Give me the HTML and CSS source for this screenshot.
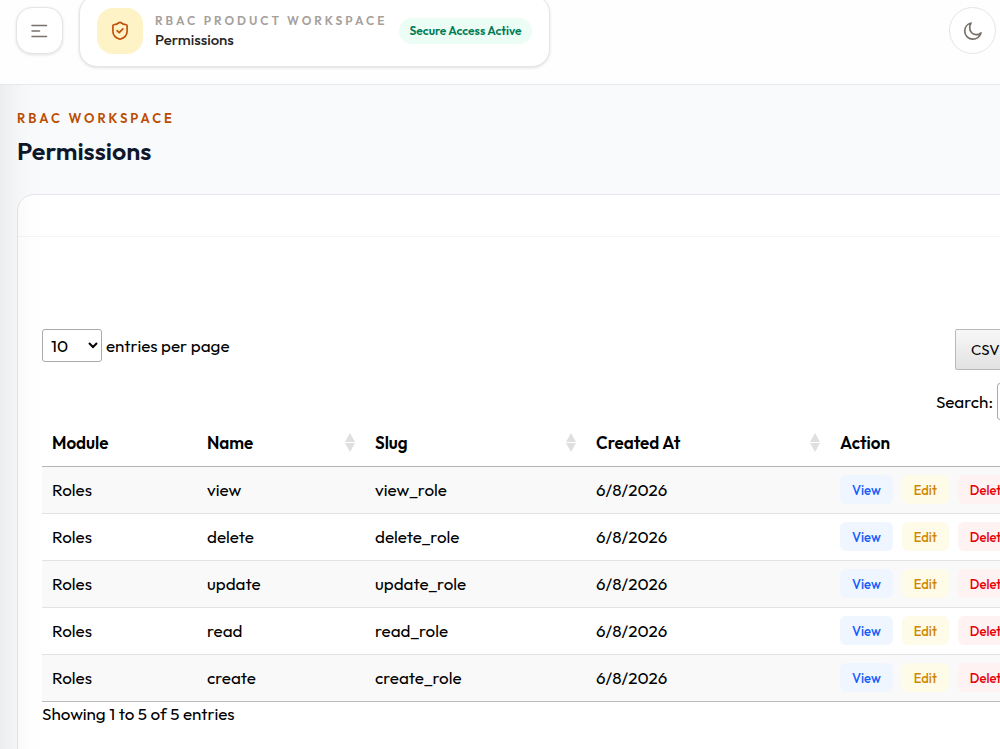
FILE: index.html
```html
<!DOCTYPE html>
<html lang="en">
<head>
  <meta charset="UTF-8">
  <meta name="viewport" content="width=device-width, initial-scale=1">
  <title>Permissions</title>
  <link rel="stylesheet" href="styles.css">
</head>
<body>
  <header class="topbar">
    <button type="button" class="icon-btn menu-btn" aria-label="Toggle sidebar">
      <svg width="18" height="14" viewBox="0 0 18 14" fill="none" stroke="#78716c" stroke-width="1.500" stroke-linecap="round">
        <path d="M1 1.500h14.500M1 7h7.500M1 12.500h14.500"/>
      </svg>
    </button>
    <div class="page-card">
      <span class="page-icon">
        <svg width="20" height="20" viewBox="0 0 24 24" fill="none" stroke="#c2500c" stroke-width="2" stroke-linecap="round" stroke-linejoin="round">
          <path d="M20.5 12.5c0 5-3.600 7.800-8.500 9.500-4.900-1.700-8.500-4.500-8.500-9.500V5.500a1 1 0 0 1 1-1c2.200 0 5-1.200 6.800-2.700a1.100 1.100 0 0 1 1.400 0C14.500 3.300 17.300 4.500 19.500 4.500a1 1 0 0 1 1 1z"/>
          <path d="M8.500 11.500l2.500 2.500 4.500-4.500"/>
        </svg>
      </span>
      <div class="page-text">
        <p class="page-label">RBAC Product Workspace</p>
        <p class="page-name">Permissions</p>
      </div>
      <span class="status">Secure Access Active</span>
    </div>
    <button type="button" class="icon-btn theme-btn" aria-label="Dark mode">
      <svg width="20" height="20" viewBox="0 0 20 20" fill="none" stroke="#78716c" stroke-width="1.700" stroke-linecap="round" stroke-linejoin="round">
        <path d="M8 2C4.300 2.900 1.700 6.200 1.700 10a8.200 8.200 0 0 0 8.200 8.200c3.900 0 7.200-2.700 8.100-6.400-1.200 1.200-2.900 1.900-4.600 1.900A6.700 6.700 0 0 1 6.700 7C6.700 5.100 7.200 3.300 8 2z"/>
      </svg>
    </button>
  </header>

  <main>
    <p class="eyebrow">RBAC Workspace</p>
    <h1>Permissions</h1>

    <div class="card">
      <div class="card-header"></div>
      <div class="card-body">
        <div class="controls">
          <div class="length">
            <select id="page-length">
              <option>10</option>
              <option>25</option>
              <option>50</option>
            </select>
            <label for="page-length">entries per page</label>
          </div>
          <div class="tools">
            <div class="export">
              <button type="button" class="export-btn">CSV</button>
            </div>
            <div class="search">
              <label for="search">Search:</label>
              <input type="search" id="search">
            </div>
          </div>
        </div>

        <table>
          <colgroup>
            <col class="col-module">
            <col class="col-name">
            <col class="col-slug">
            <col class="col-created">
            <col>
          </colgroup>
          <thead>
            <tr>
              <th>Module</th>
              <th><div class="sortable">Name <span class="sort"></span></div></th>
              <th><div class="sortable">Slug <span class="sort"></span></div></th>
              <th><div class="sortable">Created At <span class="sort"></span></div></th>
              <th>Action</th>
            </tr>
          </thead>
          <tbody>
            <tr>
              <td>Roles</td><td>view</td><td>view_role</td><td>6/8/2026</td>
              <td><div class="actions"><button type="button" class="view">View</button><button type="button" class="edit">Edit</button><button type="button" class="delete">Delete</button></div></td>
            </tr>
            <tr>
              <td>Roles</td><td>delete</td><td>delete_role</td><td>6/8/2026</td>
              <td><div class="actions"><button type="button" class="view">View</button><button type="button" class="edit">Edit</button><button type="button" class="delete">Delete</button></div></td>
            </tr>
            <tr>
              <td>Roles</td><td>update</td><td>update_role</td><td>6/8/2026</td>
              <td><div class="actions"><button type="button" class="view">View</button><button type="button" class="edit">Edit</button><button type="button" class="delete">Delete</button></div></td>
            </tr>
            <tr>
              <td>Roles</td><td>read</td><td>read_role</td><td>6/8/2026</td>
              <td><div class="actions"><button type="button" class="view">View</button><button type="button" class="edit">Edit</button><button type="button" class="delete">Delete</button></div></td>
            </tr>
            <tr>
              <td>Roles</td><td>create</td><td>create_role</td><td>6/8/2026</td>
              <td><div class="actions"><button type="button" class="view">View</button><button type="button" class="edit">Edit</button><button type="button" class="delete">Delete</button></div></td>
            </tr>
          </tbody>
        </table>
        <p class="info">Showing 1 to 5 of 5 entries</p>
      </div>
    </div>
  </main>
</body>
</html>
```
FILE: styles.css
```css
* {
  box-sizing: border-box;
  margin: 0;
  padding: 0;
}
body {
  font-family: Outfit, Lato, sans-serif;
  font-size: 17px;
  line-height: 24px;
  color: #000;
  background: #f9fafb;
  min-height: 100vh;
  overflow: hidden;
}
/* Soft shade cast by the closed sidebar */
body::after {
  content: "";
  position: fixed;
  inset: 0 auto 0 0;
  width: 44px;
  background: linear-gradient(to right, rgba(0, 0, 0, 0.05), rgba(0, 0, 0, 0.01) 50%, transparent);
  pointer-events: none;
}
button, select, input {
  font: inherit;
}
button {
  cursor: pointer;
}

/* Top bar */
.topbar {
  position: relative;
  z-index: 1;
  display: flex;
  align-items: center;
  gap: 16px;
  height: 85px;
  padding: 0 4px 23px 16px;
  background: #fefefe;
  border-bottom: 1px solid #e7e8ea;
}
.icon-btn {
  display: flex;
  align-items: center;
  justify-content: center;
  width: 47px;
  height: 47px;
  flex: none;
  background: #fff;
  border: 1px solid #e7e5e4;
}
.menu-btn {
  border-radius: 16px;
  box-shadow: 0 1px 3px rgba(0, 0, 0, 0.12);
}
.theme-btn {
  margin-left: auto;
  border-radius: 50%;
}
.page-card {
  display: flex;
  align-items: center;
  gap: 12px;
  flex: none;
  padding: 12px 17px;
  background: #fff;
  border: 1px solid #e7e5e4;
  border-radius: 18px;
  box-shadow: 0 1px 3px rgba(0, 0, 0, 0.12);
}
.page-icon {
  display: flex;
  align-items: center;
  justify-content: center;
  width: 46px;
  height: 46px;
  background: #fef3c6;
  border-radius: 16px;
}
.page-label {
  font-size: 12px;
  line-height: 18px;
  font-weight: 600;
  letter-spacing: 3px;
  text-transform: uppercase;
  color: #a6a09b;
}
.page-name {
  font-size: 15px;
  line-height: 20px;
  font-weight: 500;
  color: #292524;
}
.status {
  padding: 4px 10px;
  font-size: 12px;
  line-height: 18px;
  font-weight: 600;
  color: #007a55;
  background: #ecfdf5;
  border-radius: 13px;
}

/* Page heading */
main {
  padding: 24px 17px;
}
.eyebrow {
  font-size: 13px;
  line-height: 18px;
  font-weight: 600;
  letter-spacing: 3px;
  text-transform: uppercase;
  color: #bb4d00;
}
h1 {
  margin-top: 8px;
  font-size: 25px;
  line-height: 32px;
  font-weight: 600;
  color: #0f172b;
}

/* Card */
.card {
  width: max-content;
  min-width: 100%;
  margin-top: 27px;
  background: #fff;
  border: 1px solid #e5e7eb;
  border-radius: 17px;
}
.card-header {
  height: 42px;
  border-bottom: 1px solid #f3f4f6;
}
.card-body {
  padding: 92px 24px 48px;
}
.controls {
  display: flex;
  justify-content: space-between;
  align-items: flex-start;
}
.length {
  display: flex;
  align-items: center;
  gap: 4px;
}
.length select {
  width: 60px;
  height: 33px;
  padding: 4px;
  background: #fff;
  border: 1px solid #aaa;
  border-radius: 3px;
}
.tools {
  display: flex;
  flex-direction: column;
  align-items: flex-end;
  gap: 13px;
}
.export {
  width: 222px;
}
.export-btn {
  height: 41px;
  padding: 0 15px;
  font-size: 15px;
  background: linear-gradient(to bottom, #f8f8f8, #e2e2e2);
  border: 1px solid #b8b8b8;
  border-radius: 2px;
}
.search {
  display: flex;
  align-items: center;
  gap: 4px;
}
.search input {
  width: 180px;
  height: 37px;
  border: 1px solid #aaa;
  border-radius: 3px;
}

/* Table */
table {
  width: 1135px;
  table-layout: fixed;
  border-collapse: collapse;
  border-bottom: 1px solid #bbb;
}
.col-module {
  width: 155px;
}
.col-name {
  width: 168px;
}
.col-slug {
  width: 221px;
}
.col-created {
  width: 244px;
}
th, td {
  height: 47px;
  padding: 0 10px;
  text-align: left;
}
th {
  height: 46px;
  font-weight: 600;
  border-bottom: 1px solid #b5b5b5;
}
tbody tr + tr {
  border-top: 1px solid #e3e3e3;
}
tbody tr:nth-child(odd) {
  background: #f9f9f9;
}
.sortable {
  display: flex;
  align-items: center;
  justify-content: space-between;
}
/* Up and down arrows, unsorted state */
.sort::before, .sort::after {
  content: "";
  display: block;
  border: 5px solid transparent;
}
.sort::before {
  border-top: 0;
  border-bottom: 9px solid #dfdfdf;
  margin-bottom: 1px;
}
.sort::after {
  border-bottom: 0;
  border-top: 9px solid #dfdfdf;
}
.actions {
  display: flex;
  gap: 9px;
}
.actions button {
  height: 29px;
  padding: 0 12px;
  font-size: 13px;
  font-weight: 500;
  border: 0;
  border-radius: 6px;
}
.actions .view {
  color: #155dfc;
  background: #eff6ff;
}
.actions .edit {
  color: #d08700;
  background: #fefce8;
}
.actions .delete {
  color: #e7000b;
  background: #fef2f2;
}
```
